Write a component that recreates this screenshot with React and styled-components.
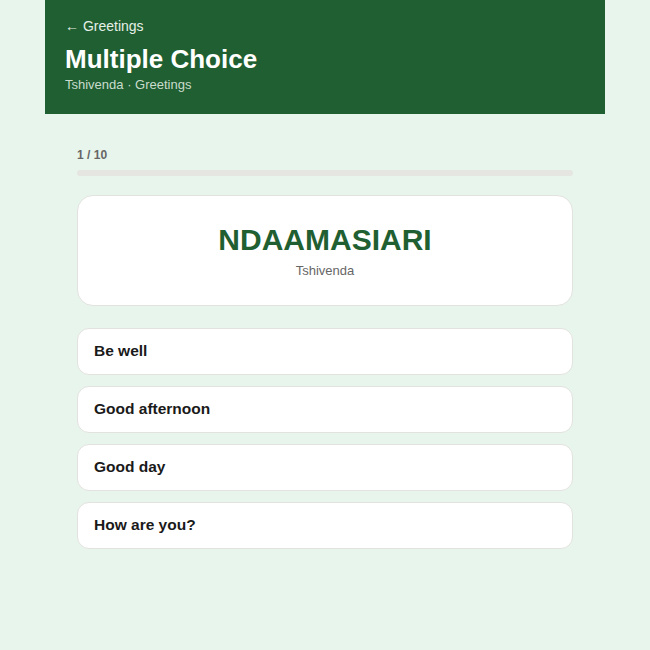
import React from 'react';
import styled, { createGlobalStyle } from 'styled-components';

const GlobalStyle = createGlobalStyle`
  body {
    margin: 0;
    background: #e8f5ec;
    font-family: "Liberation Sans", Arial, sans-serif;
  }
`;

const Page = styled.div`
  width: 560px;
  margin: 0 auto;
  min-height: 650px;
`;

const Header = styled.header`
  background: #1f5f31;
  color: #fff;
  padding: 17px 20px 21px;
  height: 114px;
  box-sizing: border-box;
`;

const BackLink = styled.div`
  font-size: 14px;
  color: #e6efe8;
  line-height: 18px;
`;

const Title = styled.h1`
  margin: 9px 0 0;
  font-size: 26px;
  font-weight: 700;
  line-height: 30px;
`;

const Subtitle = styled.div`
  margin-top: 3px;
  font-size: 13px;
  color: #c9dccd;
  line-height: 16px;
`;

const Body = styled.main`
  padding: 34px 32px;
`;

const Counter = styled.div`
  font-size: 12px;
  font-weight: 700;
  color: #666;
  line-height: 14px;
`;

const Track = styled.div`
  margin-top: 8px;
  height: 6px;
  border-radius: 3px;
  background: #e5e5e1;
  overflow: hidden;
`;

const Fill = styled.div`
  height: 100%;
  background: #1f5f31;
`;

const WordCard = styled.div`
  margin-top: 19px;
  height: 111px;
  box-sizing: border-box;
  background: #fff;
  border: 1px solid #e2e2df;
  border-radius: 16px;
  display: flex;
  flex-direction: column;
  align-items: center;
  justify-content: center;
`;

const Word = styled.div`
  font-size: 30px;
  font-weight: 700;
  color: #1f5f31;
  line-height: 34px;
`;

const Lang = styled.div`
  margin-top: 6px;
  font-size: 13px;
  color: #666;
`;

const Options = styled.div`
  margin-top: 22px;
  display: flex;
  flex-direction: column;
  gap: 11px;
`;

const Option = styled.button`
  height: 47px;
  box-sizing: border-box;
  background: #fff;
  border: 1px solid #e2e2df;
  border-radius: 12px;
  padding: 0 16px 1px;
  text-align: left;
  font-family: inherit;
  font-size: 15.5px;
  font-weight: 700;
  color: #1a1a1a;
  cursor: pointer;
`;

const choices = ['Be well', 'Good afternoon', 'Good day', 'How are you?'];

export default function App() {
  const current = 1;
  const total = 10;
  return (
    <>
      <GlobalStyle />
      <Page>
        <Header>
          <BackLink>← Greetings</BackLink>
          <Title>Multiple Choice</Title>
          <Subtitle>Tshivenda · Greetings</Subtitle>
        </Header>
        <Body>
          <Counter>{current} / {total}</Counter>
          <Track>
            <Fill style={{ width: `${((current - 1) / total) * 100}%` }} />
          </Track>
          <WordCard>
            <Word>NDAAMASIARI</Word>
            <Lang>Tshivenda</Lang>
          </WordCard>
          <Options>
            {choices.map(c => (
              <Option key={c}>{c}</Option>
            ))}
          </Options>
        </Body>
      </Page>
    </>
  );
}
